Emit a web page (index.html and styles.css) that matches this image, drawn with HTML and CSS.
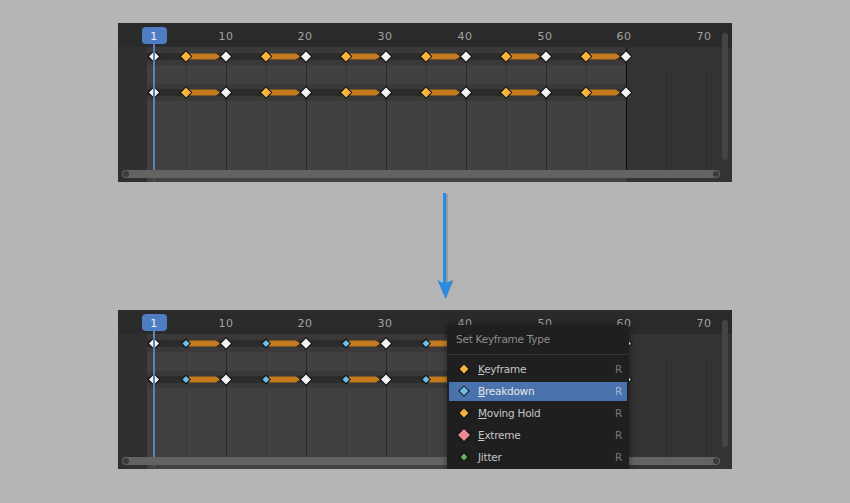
FILE: index.html
```html
<!DOCTYPE html>
<html lang="en">
  <head>
    <meta charset="utf-8" />
    <title>Set Keyframe Type</title>
    <link rel="stylesheet" href="styles.css">
  </head>
  <body>
    <svg class="defs" width="0" height="0">
      <defs>
        <!-- editor backdrop, same in both panels -->
        <g id="backdrop">
          <rect class="bg-header" width="614" height="24" />
          <rect class="bg-left" y="24" width="29" height="135" />
          <rect class="bg-range" x="29" y="24" width="479" height="135" />
          <rect class="bg-after" x="508" y="24" width="106" height="135" />
          <rect class="band" x="29" y="24" width="479" height="18" />
          <rect class="band" x="29" y="61" width="479" height="17" />
          <path class="grid-minor" d="M68.500 42V147M148.500 42V147M228.500 42V147M308.500 42V147M388.500 42V147M468.500 42V147" />
          <path class="grid-major" d="M108.500 42V147M188.500 42V147M268.500 42V147M348.500 42V147M428.500 42V147" />
          <path class="grid-end" d="M508.500 24V147" />
          <path class="grid-faint" d="M548.500 50V147M588.500 50V147" />
          <rect class="strip" x="29" y="30" width="479" height="7" />
          <rect class="strip" x="29" y="66" width="479" height="7" />
          <rect class="scroll-v" x="604" y="10" width="6" height="127" rx="3" />
          <rect class="scroll-h" x="4" y="147" width="598" height="8" rx="4" />
          <circle class="scroll-dot" cx="8" cy="151" r="3" />
          <circle class="scroll-dot" cx="598" cy="151" r="3" />
        </g>
        <path id="hold" class="hold" d="M71 30.500H98L102 33.500 98 36.500H71Z" />
        <path id="key-white" class="key-white" d="M0-5 5 0 0 5-5 0Z" />
        <path id="key-gold" class="key-gold" d="M0-5 5 0 0 5-5 0Z" />
        <path id="key-blue" class="key-blue" d="M0-3.600 3.600 0 0 3.600-3.600 0Z" />
        <path id="key-menu-gold" class="key-gold" d="M0-4.400 4.400 0 0 4.400-4.400 0Z" />
        <path id="key-menu-blue" class="key-blue" d="M0-4.400 4.400 0 0 4.400-4.400 0Z" />
        <path id="key-pink" class="key-pink" d="M0-6 6 0 0 6-6 0Z" />
        <path id="key-green" class="key-green" d="M0-3.400 3.400 0 0 3.400-3.400 0Z" />
        <g id="span-gold">
          <use href="#hold" />
          <use href="#key-gold" x="68" y="33.500" />
          <use href="#key-white" x="108" y="33.500" />
        </g>
        <g id="span-blue">
          <use href="#hold" />
          <use href="#key-blue" x="68" y="33.500" />
          <use href="#key-white" x="108" y="33.500" />
        </g>
        <g id="row-gold">
          <use href="#span-gold" />
          <use href="#span-gold" x="80" />
          <use href="#span-gold" x="160" />
          <use href="#span-gold" x="240" />
          <use href="#span-gold" x="320" />
          <use href="#span-gold" x="400" />
          <use href="#key-white" x="36" y="33.500" />
        </g>
        <g id="row-blue">
          <use href="#span-blue" />
          <use href="#span-blue" x="80" />
          <use href="#span-blue" x="160" />
          <use href="#span-blue" x="240" />
          <use href="#span-blue" x="320" />
          <use href="#span-blue" x="400" />
          <use href="#key-white" x="36" y="33.500" />
        </g>
        <g id="playhead">
          <rect class="playhead" x="35" y="20" width="2" height="127" />
          <rect class="playhead-tail" x="35" y="155" width="2" height="3" />
          <rect class="playhead-tag" x="24" y="4" width="25" height="17" rx="4" />
        </g>
      </defs>
    </svg>

    <div class="panel">
      <svg class="canvas" width="614" height="159" viewBox="0 0 614 159">
        <use href="#backdrop" />
        <text class="frame" x="108" y="17">10</text>
        <text class="frame" x="187" y="17">20</text>
        <text class="frame" x="267" y="17">30</text>
        <text class="frame" x="347" y="17">40</text>
        <text class="frame" x="427" y="17">50</text>
        <text class="frame" x="506" y="17">60</text>
        <text class="frame" x="586" y="17">70</text>
        <use href="#row-gold" />
        <use href="#row-gold" y="36" />
        <use href="#playhead" />
        <text class="frame frame-now" x="36" y="17">1</text>
      </svg>
    </div>

    <div class="arrow-row">
      <svg class="arrow" width="20" height="110" viewBox="0 0 20 110">
        <rect class="arrow-shade" x="9.500" y="1" width="2" height="90" />
        <rect class="arrow-fill" x="7" y="0" width="3" height="90" />
        <path class="arrow-shade" d="M10 106 18 87 10 91Z" />
        <path class="arrow-fill" d="M1.500 87 7 90 10 90 16.500 87 9.500 106Z" />
      </svg>
    </div>

    <div class="panel">
      <svg class="canvas" width="614" height="159" viewBox="0 0 614 159">
        <use href="#backdrop" />
        <text class="frame" x="108" y="17">10</text>
        <text class="frame" x="187" y="17">20</text>
        <text class="frame" x="267" y="17">30</text>
        <text class="frame" x="347" y="17">40</text>
        <text class="frame" x="427" y="17">50</text>
        <text class="frame" x="506" y="17">60</text>
        <text class="frame" x="586" y="17">70</text>
        <use href="#row-blue" />
        <use href="#row-blue" y="36" />
        <use href="#playhead" />
        <text class="frame frame-now" x="36" y="17">1</text>
      </svg>

      <div class="menu">
        <div class="menu-title">Set Keyframe Type</div>
        <ul class="menu-list">
          <li class="menu-item">
            <svg class="menu-icon" width="16" height="16" viewBox="-8 -8 16 16"><use href="#key-menu-gold" /></svg>
            <span class="menu-label"><u>K</u>eyframe</span>
            <span class="menu-key">R</span>
          </li>
          <li class="menu-item active">
            <svg class="menu-icon" width="16" height="16" viewBox="-8 -8 16 16"><use href="#key-menu-blue" /></svg>
            <span class="menu-label"><u>B</u>reakdown</span>
            <span class="menu-key">R</span>
          </li>
          <li class="menu-item">
            <svg class="menu-icon" width="16" height="16" viewBox="-8 -8 16 16"><use href="#key-menu-gold" /></svg>
            <span class="menu-label"><u>M</u>oving Hold</span>
            <span class="menu-key">R</span>
          </li>
          <li class="menu-item">
            <svg class="menu-icon" width="16" height="16" viewBox="-8 -8 16 16"><use href="#key-pink" /></svg>
            <span class="menu-label"><u>E</u>xtreme</span>
            <span class="menu-key">R</span>
          </li>
          <li class="menu-item">
            <svg class="menu-icon" width="16" height="16" viewBox="-8 -8 16 16"><use href="#key-green" /></svg>
            <span class="menu-label"><u>J</u>itter</span>
            <span class="menu-key">R</span>
          </li>
        </ul>
      </div>
    </div>
  </body>
</html>
```

FILE: styles.css
```css
html, body {
  height: 100%;
}
body {
  margin: 0;
  padding-top: 23px;
  box-sizing: border-box;
  background: #b5b5b5;
  display: flex;
  flex-direction: column;
  align-items: center;
  overflow: hidden;
  font-family: "DejaVu Sans", sans-serif;
}

.defs {
  position: absolute;
}

.panel {
  position: relative;
  width: 614px;
  height: 159px;
  overflow: hidden;
  background: #2e2e2e;
}
.canvas {
  display: block;
}

/* backdrop */
.bg-header { fill: #2a2a2a; }
.bg-left { fill: #2f2f2f; }
.bg-range { fill: #414141; }
.bg-after { fill: #333; }
.band { fill: #393939; }
.strip { fill: #2c2c2c; }
.grid-minor { stroke: #383838; stroke-width: 1; fill: none; }
.grid-major { stroke: #272727; stroke-width: 1; fill: none; }
.grid-end { stroke: #0c0c0c; stroke-width: 1; fill: none; }
.grid-faint { stroke: #2c2c2c; stroke-width: 1; fill: none; }
.scroll-v { fill: #444; }
.scroll-h { fill: #636363; }
.scroll-dot { fill: #3a3a3a; }

/* ruler */
.frame {
  fill: #a3a3a3;
  font-size: 11px;
  letter-spacing: .4px;
  text-anchor: middle;
}
.frame-now {
  fill: #f0f0f0;
}
.playhead { fill: #5c82bb; }
.playhead-tail { fill: #505050; }
.playhead-tag { fill: #4f7dc4; }

/* keys */
.hold { fill: #c67c1e; }
.key-white, .key-gold, .key-blue, .key-pink, .key-green {
  stroke: #111;
  stroke-width: 2;
  paint-order: stroke;
}
.key-white { fill: #f4f4f4; }
.key-gold { fill: #f7b33f; }
.key-blue { fill: #6dbde8; }
.key-pink { fill: #ea8b93; }
.key-green { fill: #66b45a; }

/* arrow */
.arrow-row {
  height: 128px;
  width: 614px;
  box-sizing: border-box;
  padding: 11px 0 0 318px;
}
.arrow {
  display: block;
}
.arrow-fill { fill: #2a8be2; }
.arrow-shade { fill: #84929f; }

/* popup menu */
.menu {
  position: absolute;
  left: 329px;
  top: 15px;
  width: 182px;
  height: 150px;
  padding: 0 2px;
  box-sizing: border-box;
  background: #1f1f1f;
  border-radius: 4px 4px 0 0;
  box-shadow: 0 0 6px rgba(0, 0, 0, .45);
}
.menu-title {
  height: 29px;
  line-height: 29px;
  margin: 0 -2px;
  padding-left: 9px;
  font-size: 10.500px;
  letter-spacing: -.25px;
  color: #8c8c8c;
  border-bottom: 1px solid #343434;
  box-sizing: content-box;
}
.menu-list {
  list-style: none;
  margin: 0;
  padding: 5px 0 0;
  display: flex;
  flex-direction: column;
  gap: 3px;
}
.menu-item {
  height: 19px;
  box-sizing: border-box;
  display: flex;
  align-items: center;
  padding: 0 5px 2px 7px;
  font-size: 10.500px;
  letter-spacing: -.25px;
  color: #c6c6c6;
}
.menu-item.active {
  background: #4a72ad;
  color: #e6e6e6;
}
.menu-icon {
  flex: none;
  margin-right: 6px;
}
.menu-label {
  flex: 1;
}
.menu-key {
  color: #777;
}
.active .menu-key {
  color: #a5b6d0;
}
```
